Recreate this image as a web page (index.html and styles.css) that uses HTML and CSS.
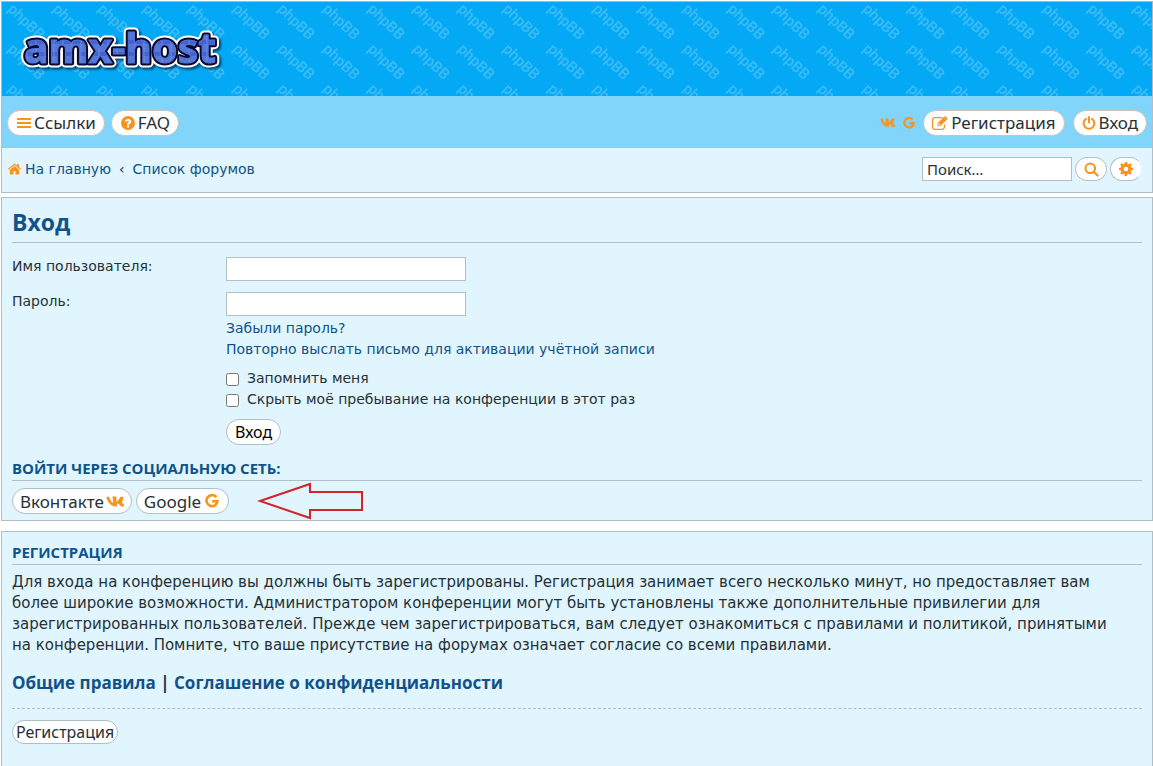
FILE: index.html
```html
<!DOCTYPE html>
<html lang="ru">
<head>
  <meta charset="UTF-8">
  <meta name="viewport" content="width=device-width, initial-scale=1.0">
  <title>amx-host - Вход</title>
  <link rel="stylesheet" href="styles.css">
</head>
<body>
  <!-- icon set -->
  <svg class="sprite" aria-hidden="true">
    <symbol id="i-bars" viewBox="0 0 14 14"><path d="M0 2h14v2H0zM0 6h14v2H0zM0 10h14v2H0z"/></symbol>
    <symbol id="i-question" viewBox="0 0 14 14"><path fill-rule="evenodd" d="M7 0a7 7 0 1 1 0 14A7 7 0 0 1 7 0zM6 9.6v1.9h2V9.6zM4 4.9l1.4 1c.5-.7.9-1 1.5-1s1 .3 1 .8-.4.7-.9 1C6.300 7.100 6 7.700 6 8.800h2c0-.4.2-.6.7-.9.8-.5 1.500-1.100 1.500-2.300C10.200 3.900 8.700 3 7.100 3 5.700 3 4.700 3.700 4 4.900z"/></symbol>
    <symbol id="i-vk" viewBox="-2 0 20 11"><path d="M17.300.9c.2-.5 0-.8-.6-.8h-2.200c-.5 0-.8.3-.9.6 0 0-1.100 2.600-2.700 4.200-.5.500-.7.6-1 .6-.1 0-.3-.1-.3-.6V.9c0-.6-.2-.9-.7-.9H5.500c-.4 0-.6.3-.6.500 0 .6.800.7.900 2.200v3.200c0 .7-.1.900-.4.900-.7 0-2.500-2.700-3.600-5.800C1.600.4 1.300.1.800.1H-.800c-.6 0-.7.300-.7.600 0 .6.700 3.400 3.400 7.100C3.700 10.200 6.300 11 8.600 11c1.400 0 1.600-.3 1.600-.8V8.300c0-.6.1-.7.600-.7.300 0 .9.200 2.200 1.400 1.400 1.500 1.700 2 2.500 2h2.200c.6 0 .9-.3.800-.9-.3-1-2.500-3.100-2.600-3.300-.4-.5-.3-.7 0-1.100 0 0 1.200-1.700 1.400-4.800z"/></symbol>
    <symbol id="i-google" viewBox="0 0 14 14"><path fill="none" stroke="currentColor" stroke-width="2.600" d="M11.300 3.100A5.500 5.500 0 1 0 12.500 7.200H7.200"/></symbol>
    <symbol id="i-edit" viewBox="0 0 16 14"><path fill="none" stroke="currentColor" stroke-width="1.200" d="M10.500 1.600H3A2.400 2.400 0 0 0 .6 4v7A2.400 2.400 0 0 0 3 13.400h7a2.400 2.400 0 0 0 2.400-2.400V8.500"/><path fill-rule="evenodd" d="M5.500 7.300 11.700 1.100l2.800 2.800-6.200 6.200H5.500zM12.400.5c.4-.4 1-.4 1.400 0l1.500 1.500c.4.400.4 1 0 1.400l-.5.500L12 1zM6.400 7.800v1.400h1.300l.6-.6-1.300-1.400z"/></symbol>
    <symbol id="i-power" viewBox="0 0 14 14"><path fill="none" stroke="currentColor" stroke-width="2" stroke-linecap="round" d="M4 2.800a5.400 5.400 0 1 0 6 0M7 1v5.500"/></symbol>
    <symbol id="i-home" viewBox="0 0 14 12"><path d="M7 2.900 12 7v4.300c0 .4-.2.600-.6.600H8.300V8.300H5.700v3.600H2.600c-.4 0-.6-.2-.6-.6V7zM7 0l2.700 2.200V.6h2v3.300L14 5.800l-.8.900L7 1.700.8 6.700 0 5.800z"/></symbol>
    <symbol id="i-search" viewBox="0 0 16 16"><path fill="none" stroke="currentColor" stroke-width="2.200" stroke-linecap="round" d="M6.700 1.600a5.100 5.100 0 1 1 0 10.200 5.100 5.100 0 0 1 0-10.200zM10.600 10.600l3.900 3.900"/></symbol>
    <symbol id="i-cog" viewBox="0 0 14 14"><path fill-rule="evenodd" d="M5.900 0h2.200l.4 1.900 1 .4L11.200 1.200l1.600 1.600-1.100 1.700.4 1 1.900.4v2.200l-1.900.4-.4 1 1.100 1.700-1.600 1.600-1.700-1.100-1 .4L8.100 14H5.900l-.4-1.900-1-.4-1.700 1.100-1.600-1.600 1.100-1.700-.4-1L0 8.100V5.900l1.900-.4.4-1L1.200 2.800l1.600-1.600 1.700 1.100 1-.4zM7 4.700a2.300 2.300 0 1 0 0 4.600 2.300 2.300 0 0 0 0-4.600z"/></symbol>
  </svg>

  <div class="wrap">
    <header class="header">
      <svg class="header-bg" aria-hidden="true">
        <defs>
          <pattern id="tile" width="45" height="40" patternUnits="userSpaceOnUse">
            <text class="tile-text" transform="translate(3 8) rotate(44)">phpBB</text>
          </pattern>
        </defs>
        <rect width="100%" height="100%" fill="url(#tile)"/>
      </svg>
      <a class="logo" href="#">
        <svg width="210" height="64" role="img" aria-label="amx-host">
          <defs>
            <pattern id="denim" width="9" height="12" patternUnits="userSpaceOnUse">
              <rect width="9" height="12" fill="#5478d8"/>
              <rect y="7" width="9" height="4" fill="#4462d2"/>
              <rect x="3" width="2" height="12" fill="#6a8be0" opacity="0.5"/>
            </pattern>
          </defs>
          <g class="logo-text">
            <text class="logo-outer" x="10" y="42">amx-host</text>
            <text class="logo-inner" x="10" y="42">amx-host</text>
            <text class="logo-fill" x="10" y="42">amx-host</text>
          </g>
        </svg>
      </a>
    </header>

    <nav class="navbar">
      <div class="nav-main">
        <a class="pill" href="#"><svg class="icon"><use href="#i-bars"/></svg>Ссылки</a>
        <a class="pill" href="#"><svg class="icon"><use href="#i-question"/></svg>FAQ</a>
        <div class="nav-right">
          <a class="social" href="#" aria-label="Вконтакте"><svg class="icon icon-vk-small"><use href="#i-vk"/></svg></a>
          <a class="social" href="#" aria-label="Google"><svg class="icon icon-small"><use href="#i-google"/></svg></a>
          <a class="pill" href="#"><svg class="icon icon-edit"><use href="#i-edit"/></svg>Регистрация</a>
          <a class="pill" href="#"><svg class="icon"><use href="#i-power"/></svg>Вход</a>
        </div>
      </div>
      <div class="nav-sub">
        <div class="crumbs">
          <svg class="icon icon-home"><use href="#i-home"/></svg>
          <a href="#">На главную</a>
          <span class="sep">‹</span>
          <a href="#">Список форумов</a>
        </div>
        <form class="search" role="search">
          <input type="search" placeholder="Поиск…" aria-label="Поиск">
          <button type="submit" class="search-btn" aria-label="Поиск"><svg class="icon icon-search"><use href="#i-search"/></svg></button>
          <a class="search-btn search-adv" href="#" aria-label="Расширенный поиск"><svg class="icon"><use href="#i-cog"/></svg></a>
        </form>
      </div>
    </nav>

    <main>
      <section class="panel panel-login">
        <h2>Вход</h2>
        <form class="login">
          <label for="username">Имя пользователя:</label>
          <div><input type="text" id="username"></div>
          <label for="password">Пароль:</label>
          <div>
            <input type="password" id="password">
            <div class="login-links">
              <a href="#">Забыли пароль?</a>
              <a href="#">Повторно выслать письмо для активации учётной записи</a>
            </div>
          </div>
          <div class="options">
            <label><input type="checkbox">Запомнить меня</label>
            <label><input type="checkbox">Скрыть моё пребывание на конференции в этот раз</label>
          </div>
          <div class="submit"><button type="submit" class="button">Вход</button></div>
        </form>
        <h3>Войти через социальную сеть:</h3>
        <div class="social-login">
          <a class="pill" href="#">Вконтакте<svg class="icon icon-vk"><use href="#i-vk"/></svg></a>
          <a class="pill" href="#">Google<svg class="icon icon-google"><use href="#i-google"/></svg></a>
          <svg class="arrow" viewBox="0 0 108 38" aria-hidden="true"><path d="M3 19 53 2v8h52v18H53v8z"/></svg>
        </div>
      </section>

      <section class="panel panel-register">
        <h3>Регистрация</h3>
        <p>Для входа на конференцию вы должны быть зарегистрированы. Регистрация занимает всего несколько минут, но предоставляет вам более широкие возможности. Администратором конференции могут быть установлены также дополнительные привилегии для зарегистрированных пользователей. Прежде чем зарегистрироваться, вам следует ознакомиться с правилами и политикой, принятыми на конференции. Помните, что ваше присутствие на форумах означает согласие со всеми правилами.</p>
        <p class="rules"><a href="#">Общие правила</a> | <a href="#">Соглашение о конфиденциальности</a></p>
        <hr>
        <a class="button button-register" href="#">Регистрация</a>
      </section>
    </main>
  </div>
</body>
</html>
```

FILE: styles.css
```css
* {
  box-sizing: border-box;
}

body {
  margin: 0;
  padding: 1px 0 0 1px;
  background: #fff;
  color: #263036;
  font-family: Verdana, "DejaVu Sans", sans-serif;
  font-size: 14px;
  line-height: 21px;
}

a {
  color: #105289;
  text-decoration: none;
}

a:hover {
  text-decoration: underline;
}

.sprite {
  display: none;
}

.icon {
  width: 14px;
  height: 14px;
  flex: none;
  color: #f7941d;
  fill: currentColor;
}

.icon-vk {
  width: 18px;
  height: 11px;
}

.icon-vk-small {
  width: 15px;
  height: 9px;
}

.icon-edit {
  width: 16px;
}

.icon-google {
  width: 18px;
}

.icon-small {
  width: 12px;
  height: 12px;
}

.icon-home {
  width: 13px;
  height: 12px;
}

.icon-search {
  width: 15px;
  height: 15px;
}

/* Header */
.header {
  position: relative;
  height: 95px;
  padding: 19px 12px;
  background: #03a9f4;
  border: 1px solid #a9b8c2;
  border-bottom: none;
  overflow: hidden;
}

.header-bg {
  position: absolute;
  top: 0;
  left: 2px;
  width: 100%;
  height: 100%;
}

.tile-text {
  font-family: Roboto, sans-serif;
  font-size: 15px;
  font-weight: 500;
  fill: #3bbcf7;
}

.logo {
  position: relative;
  display: block;
  width: 210px;
}

.logo svg {
  display: block;
  overflow: visible;
}

.logo-text {
  font-family: "Noto Sans", sans-serif;
  font-size: 41px;
  font-weight: 700;
  filter: drop-shadow(2px 2px 1px rgba(0, 30, 60, 0.7));
}

.logo-outer {
  fill: #fff;
  stroke: #fff;
  stroke-width: 9px;
  stroke-linejoin: round;
}

.logo-inner {
  stroke: #0a0a30;
  stroke-width: 5px;
  stroke-linejoin: round;
}

.logo-fill {
  fill: url(#denim);
  stroke: #5074d6;
  stroke-width: 1px;
}

/* Navigation */
.navbar {
  background: #e1f5fe;
  border: 1px solid #b0bec5;
  border-top: none;
}

.nav-main {
  display: flex;
  align-items: center;
  gap: 6px;
  height: 52px;
  padding: 2px 5px 0;
  background: #81d4fa;
  border-bottom: 1px solid #b0bec5;
}

.nav-right {
  display: flex;
  align-items: center;
  gap: 8px;
  margin-left: auto;
}

.social {
  display: flex;
}

.pill {
  display: flex;
  align-items: center;
  gap: 3px;
  height: 26px;
  padding: 0 8px;
  background: #fff;
  border: 1px solid #c7c3bf;
  border-radius: 13px;
  color: #263036;
  font-family: "Noto Sans", sans-serif;
  font-size: 17px;
}

.nav-main > .pill {
  padding-left: 9px;
}

.nav-sub {
  display: flex;
  justify-content: space-between;
  height: 44px;
  padding: 9px 10px 0 6px;
}

.crumbs {
  display: flex;
  align-items: center;
  gap: 4px;
  height: 24px;
}

.sep {
  padding: 0 4px;
}

.search {
  display: flex;
  gap: 3px;
}

.search input {
  width: 150px;
  height: 24px;
  padding: 0 4px;
  border: 1px solid #b0bec5;
  font-family: "Noto Sans", sans-serif;
  font-size: 15px;
}

.search input::placeholder {
  color: #263036;
}

.search-btn {
  display: flex;
  align-items: center;
  justify-content: center;
  width: 32px;
  height: 24px;
  padding: 0;
  background: #fff;
  border: 1px solid #b0bec5;
  border-radius: 12px;
}

.search-adv {
  border-right-color: #e1f5fe;
}

/* Panels */
.panel {
  padding: 10px;
  background: #e1f5fe;
  border: 1px solid #b0bec5;
}

.panel-login {
  margin-top: 4px;
  padding-bottom: 6px;
}

.panel-register {
  margin-top: 10px;
  padding-bottom: 40px;
}

h2,
h3 {
  margin: 0;
  border-bottom: 1px solid #b0bec5;
  color: #105289;
  font-family: "Open Sans", "Noto Sans", sans-serif;
}

h2 {
  margin-bottom: 14px;
  padding-bottom: 6px;
  font-size: 23px;
  line-height: 28px;
}

h3 {
  padding-bottom: 1px;
  font-size: 15px;
  text-transform: uppercase;
}

.login {
  display: grid;
  grid-template-columns: 214px 1fr;
  row-gap: 11px;
}

.login > label {
  margin-top: -1px;
}

.login input[type="text"],
.login input[type="password"] {
  display: block;
  width: 240px;
  height: 24px;
  padding: 0 4px;
  background: #fff;
  border: 1px solid #b0bec5;
}

.login-links {
  display: flex;
  flex-direction: column;
  align-items: flex-start;
  padding-top: 2px;
}

.options,
.submit {
  grid-column: 2;
}

.options {
  margin-top: -3px;
}

.options label {
  display: flex;
  align-items: center;
  gap: 8px;
}

.options input {
  width: 13px;
  height: 13px;
  margin: 2px 0 0;
}

.button {
  display: inline-block;
  height: 26px;
  padding: 0 8px;
  background: #fff;
  border: 1px solid #b0bec5;
  border-radius: 13px;
  color: #000;
  font-family: "Noto Sans", sans-serif;
  font-size: 16px;
}

.submit {
  margin: -2px 0 13px;
  line-height: 0;
}

.social-login {
  display: flex;
  align-items: center;
  gap: 4px;
  margin-top: 7px;
}

.social-login .pill {
  gap: 2px;
  padding: 0 7px;
  border-color: #b0bec5;
}

.arrow {
  width: 108px;
  height: 38px;
  margin: -6px 0 -6px 24px;
  fill: none;
  stroke: #d2232a;
  stroke-width: 2;
}

.panel-register p {
  margin: 7px 0 16px;
  padding-right: 14px;
  font-size: 15px;
}

.panel-register .rules {
  margin-bottom: 15px;
  font-family: "Open Sans", "Noto Sans", sans-serif;
  font-size: 17px;
  font-weight: bold;
}

hr {
  margin: 0 0 11px;
  border: 0;
  border-top: 1px dashed #b0bec5;
}

.button-register {
  height: 24px;
  padding: 0 3px;
  color: #263036;
  line-height: 22px;
}
```
